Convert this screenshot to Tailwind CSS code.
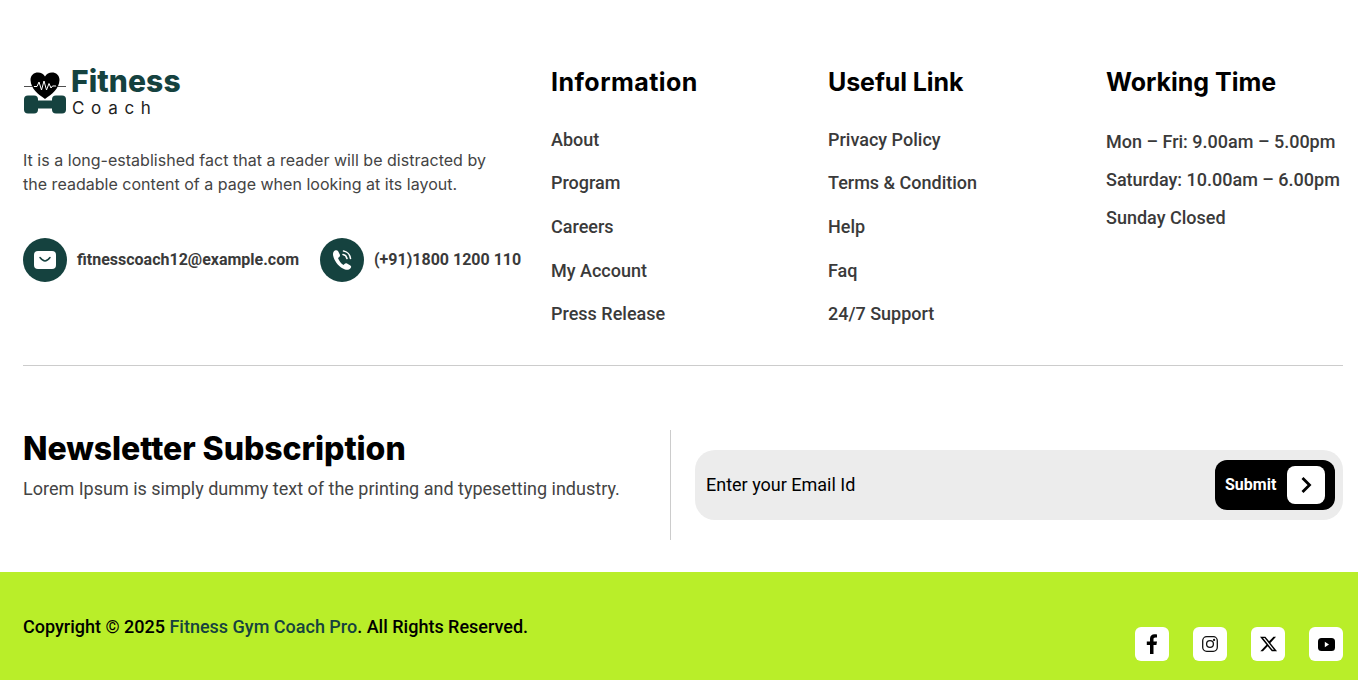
<!DOCTYPE html>
<html lang="en">
<head>
  <meta charset="UTF-8" />
  <meta name="viewport" content="width=device-width, initial-scale=1.0"/>
  <title>Fitness Coach - Footer</title>
  <script src="https://cdn.jsdelivr.net/npm/@tailwindcss/browser@4"></script>
</head>
<body class="bg-white font-['Roboto',sans-serif] text-[#3a3a3a] overflow-hidden">
  <footer class="h-[680px] flex flex-col">
    <div class="pl-[23px] pr-[15px] pt-[67px] flex-1">
      <div class="grid grid-cols-[528px_277px_278px_1fr] h-[299px] border-b border-[#ccc]">
        <div>
          <div class="flex items-start h-[50px]">
            <svg width="44" height="50" viewBox="0 0 44 50" class="mt-[1px]">
              <path d="M22 31 C15 26 8 21 7.500 12 C7.500 7 11 4.500 15 4.500 C18 4.500 20.500 6 22 8.500 C23.500 6 26 4.500 29 4.500 C33 4.500 36.500 7 36.500 12 C36 21 29 26 22 31Z" fill="#000"/>
              <path d="M1 18.500H11M33 18.500H43" stroke="#222" stroke-width="0.800"/>
              <path d="M11 18.500H14L16 14L18.500 22L21 13L23.500 22L26 15.500L28 20L29.500 18H33" fill="none" stroke="#fff" stroke-width="1"/>
              <rect x="1" y="27.500" width="14" height="18" rx="4" fill="#15423f"/>
              <rect x="29" y="27.500" width="14" height="18" rx="4" fill="#15423f"/>
              <rect x="12" y="32.500" width="20" height="8" fill="#15423f"/>
            </svg>
            <div class="ml-[4px] -mt-[2px]">
              <div class="font-['Inter',sans-serif] font-extrabold text-[30px] leading-[33px] tracking-[0.1px] text-[#15423f]">Fitness</div>
              <div class="font-['Inter',sans-serif] text-[17px] leading-[20px] tracking-[6.700px] text-[#222] ml-[1px]">Coach</div>
            </div>
          </div>
          <p class="mt-[31px] w-[480px] font-['Inter',sans-serif] text-[16px] leading-[24px] tracking-[0.02px] text-[#444]">It is a long-established fact that a reader will be distracted by the readable content of a page when looking at its layout.</p>
          <div class="flex items-center mt-[42px]">
            <div class="w-[44px] h-[44px] rounded-full bg-[#15423f] flex items-center justify-center">
              <svg width="22" height="18" viewBox="0 0 22 18"><rect width="22" height="18" rx="4" fill="#fff"/><path d="M6 6.500C8 9 9.500 10 11 10S14 9 16 6.500" fill="none" stroke="#15423f" stroke-width="1.500" stroke-linecap="round"/></svg>
            </div>
            <span class="ml-[10px] font-bold text-[16px] w-[243px]">fitnesscoach12@example.com</span>
            <div class="w-[44px] h-[44px] rounded-full bg-[#15423f] flex items-center justify-center">
              <svg width="24" height="24" viewBox="0 0 24 24"><path d="M5 2.500C3 3.500 2.500 6 3.500 9C5 14 9.500 19.500 15 21.500C17.500 22.300 20 21.500 21 19.500C21.500 18.500 21 17.800 20 17.200L17 15.500C16 15 15.200 15.200 14.500 16L13.500 17C11 15.500 9 12.500 8 10L9.300 9C10 8.300 10.200 7.500 9.800 6.500L8 3C7.300 2 6 2 5 2.500Z" fill="#fff"/><path d="M13 6.500C15 6.800 16.500 8.300 17 10.500M13.500 3C17 3.500 20 6.500 20.500 10.500" fill="none" stroke="#fff" stroke-width="1.600" stroke-linecap="round"/></svg>
            </div>
            <span class="ml-[10px] font-bold text-[16px]">(+91)1800 1200 110</span>
          </div>
        </div>
        <div>
          <h3 class="font-['Inter',sans-serif] font-bold text-[25px] leading-[30px] tracking-[0.45px] text-black">Information</h3>
          <ul class="mt-[28.800px] font-medium text-[18px] leading-[27px] flex flex-col gap-[16.600px]">
            <li>About</li><li>Program</li><li>Careers</li><li>My Account</li><li>Press Release</li>
          </ul>
        </div>
        <div>
          <h3 class="font-['Inter',sans-serif] font-bold text-[25px] leading-[30px] tracking-[-0.1px] text-black">Useful Link</h3>
          <ul class="mt-[28.800px] font-medium text-[18px] leading-[27px] flex flex-col gap-[16.600px]">
            <li>Privacy Policy</li><li>Terms &amp; Condition</li><li>Help</li><li>Faq</li><li>24/7 Support</li>
          </ul>
        </div>
        <div>
          <h3 class="font-['Inter',sans-serif] font-bold text-[25px] leading-[30px] tracking-[-0.02px] text-black">Working Time</h3>
          <ul class="mt-[31px] font-medium text-[18px] leading-[27px] flex flex-col gap-[11px] whitespace-nowrap">
            <li>Mon – Fri: 9.00am – 5.00pm</li><li>Saturday: 10.00am – 6.00pm</li><li>Sunday Closed</li>
          </ul>
        </div>
      </div>
      <div class="flex mt-[64px] h-[110px]">
        <div class="w-[648px] border-r border-[#ccc]">
          <h2 class="font-['Inter',sans-serif] font-extrabold text-[32px] leading-[38px] tracking-[-0.05px] text-black">Newsletter Subscription</h2>
          <p class="mt-[7px] text-[18px] leading-[27px] text-[#444]">Lorem Ipsum is simply dummy text of the printing and typesetting industry.</p>
        </div>
        <div class="ml-[24px] mt-[20px] flex-1 h-[70px] rounded-[20px] bg-[#ececec] flex items-center justify-between pl-[11px] pr-[8px]">
          <span class="text-[18px] leading-[27px] -mt-[2px] text-black">Enter your Email Id</span>
          <div class="w-[120px] h-[50px] rounded-[12px] bg-black flex items-center pl-[10px]">
            <span class="font-bold text-[16px] text-white">Submit</span>
            <div class="ml-[11px] w-[38px] h-[38px] rounded-[8px] bg-white flex items-center justify-center">
              <svg width="12" height="18" viewBox="0 0 12 18"><path d="M2.500 2L9.500 9L2.500 16" fill="none" stroke="#000" stroke-width="2.800"/></svg>
            </div>
          </div>
        </div>
      </div>
    </div>
    <div class="h-[108px] bg-[#b9ee29] pl-[23px] pr-[15px] flex justify-between">
      <p class="pt-[41px] font-medium text-[18px] leading-[27px] text-black">Copyright © 2025 <span class="text-[#15423f]">Fitness Gym Coach Pro</span>. All Rights Reserved.</p>
      <div class="flex gap-[24px] pt-[55px]">
        <div class="w-[34px] h-[34px] rounded-[6px] bg-white flex items-center justify-center">
          <svg width="12" height="20" viewBox="0 0 12 20"><path d="M4 20V11H0.800V7.500H4V5C4 1.800 5.800 0.300 8.500 0.300C9.800 0.300 11 0.500 11 0.500V3.500H9.500C8 3.500 7.500 4.300 7.500 5.300V7.500H11L10.400 11H7.500V20Z" fill="#000"/></svg>
        </div>
        <div class="w-[34px] h-[34px] rounded-[6px] bg-white flex items-center justify-center">
          <svg width="16" height="16" viewBox="0 0 16 16" fill="none" stroke="#111" stroke-width="1.300"><rect x="0.700" y="0.700" width="14.600" height="14.600" rx="4"/><circle cx="8" cy="8" r="3.400"/><circle cx="12.100" cy="3.900" r="0.500" fill="#111"/></svg>
        </div>
        <div class="w-[34px] h-[34px] rounded-[6px] bg-white flex items-center justify-center">
          <svg width="19" height="18" viewBox="0 0 24 24" preserveAspectRatio="none"><path d="M18.244 2.250h3.308l-7.227 8.260 8.502 11.240H16.170l-5.214-6.817L4.990 21.750H1.680l7.730-8.835L1.254 2.250H8.080l4.713 6.231zm-1.161 17.520h1.833L7.084 4.126H5.117z" fill="#000"/></svg>
        </div>
        <div class="w-[34px] h-[34px] rounded-[6px] bg-white flex items-center justify-center">
          <svg width="17" height="13" viewBox="0 0 17 13"><rect width="17" height="13" rx="3.500" fill="#000"/><path d="M6.800 3.800L11 6.500L6.800 9.200Z" fill="#fff"/></svg>
        </div>
      </div>
    </div>
  </footer>
</body>
</html>
